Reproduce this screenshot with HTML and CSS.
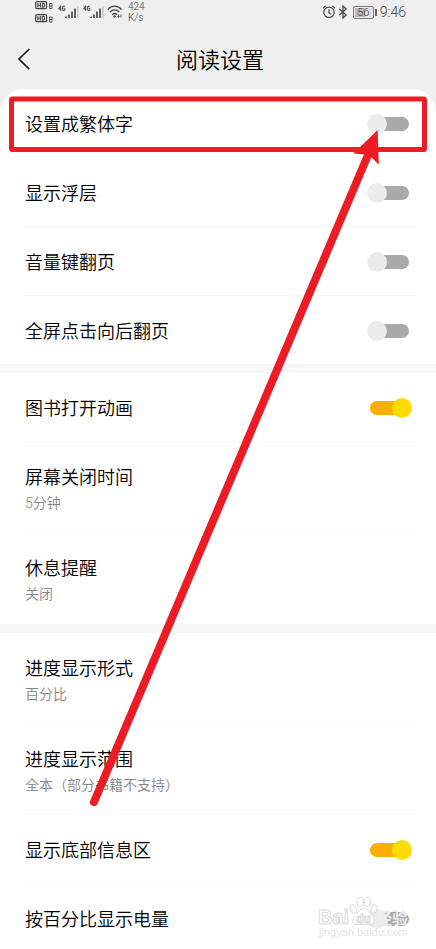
FILE: index.html
```html
<!DOCTYPE html>
<html lang="zh-CN">
<head>
<meta charset="utf-8">
<meta name="viewport" content="width=device-width, initial-scale=1">
<title>阅读设置</title>
<link rel="stylesheet" href="styles.css">
</head>
<body>
<div class="screen">
  <div class="status">
    <div class="status-left">
      <svg class="hd" width="20" height="24" viewBox="0 0 20 24" aria-hidden="true">
        <g id="hdmark">
          <rect x="0.6" y="1.6" width="11" height="7" rx="1.4" fill="none" stroke="#444" stroke-width="1.2"/>
          <path d="M2.8 3v4.4M5.4 3v4.4M2.8 5.2h2.6M7.4 3.3v3.8h1c1.6 0 1.6-3.8 0-3.8z" fill="none" stroke="#444" stroke-width="1.1"/>
        </g>
        <use href="#hdmark" y="13"/>
        <path d="M14.500 3.500h2.500v5h-2.500zM14.500 6h2.500" fill="none" stroke="#555" stroke-width="1"/>
        <path d="M14.500 17h2.500v5h-2.500zM14.500 19.500h2.500" fill="none" stroke="#555" stroke-width="1"/>
      </svg>
      <svg class="signal" width="21" height="14" viewBox="0 0 21 14" aria-hidden="true">
        <g id="bars">
          <path d="M2.500.8L.6 4h2.700M2.600.8v5M6.800 1.300H4.700v4h2.100V3.300H5.800" fill="none" stroke="#444" stroke-width="1"/>
          <path d="M8 11.500v1.500M11 9.500v3.500M14 6.500v6.500M17 3.500v9.500" stroke="#4a4a4a" stroke-width="1.700"/>
          <path d="M19.800 1v12" stroke="#c4c4c4" stroke-width="1.500"/>
        </g>
      </svg>
      <svg class="signal" width="21" height="14" viewBox="0 0 21 14" aria-hidden="true"><use href="#bars"/></svg>
      <svg class="wifi" width="16" height="14" viewBox="0 0 16 14" aria-hidden="true">
        <path d="M.8 4.500C4.800-.1 10.500-.1 14.500 4.500M3 7.100c2.800-3 6.600-3 9.400 0M5.300 9.700c1.500-1.500 3.300-1.500 4.800 0" fill="none" stroke="#444" stroke-width="1.300"/>
        <circle cx="7.500" cy="11.500" r="1.200" fill="#444"/>
        <path d="M11.500 9.500v3M10.500 11.300l1 1.200 1-1.200M14 12.500v-3" fill="none" stroke="#555" stroke-width="1"/>
      </svg>
      <div class="speed"><span>424</span><span>K/s</span></div>
    </div>
    <div class="status-right">
      <svg width="14" height="14" viewBox="0 0 14 14" fill="none" stroke="#444" stroke-width="1.200" aria-hidden="true">
        <circle cx="7" cy="7.300" r="5.200"/><path d="M7 4.300v3.300l2 1.700M1 3.300L3.500 1M13 3.300L10.500 1"/>
      </svg>
      <svg width="10" height="14" viewBox="0 0 10 14" fill="none" stroke="#444" stroke-width="1.200" aria-hidden="true">
        <path d="M1.200 4l7 6L5 13V1l3.200 3-7 6"/>
      </svg>
      <span class="battery"><span class="battery-level">56</span></span>
      <span class="clock">9:46</span>
    </div>
  </div>

  <header class="titlebar">
    <button class="back" type="button" aria-label="返回">
      <svg width="14" height="24" viewBox="0 0 14 24" fill="none" stroke="#111" stroke-width="1.600"><path d="M12.300 2L2 12l10.300 10.300"/></svg>
    </button>
    <h1>阅读设置</h1>
  </header>

  <main class="settings">
    <section class="group">
      <label class="row"><span class="name">设置成繁体字</span><input class="switch" type="checkbox"></label>
      <label class="row"><span class="name">显示浮层</span><input class="switch" type="checkbox"></label>
      <label class="row"><span class="name">音量键翻页</span><input class="switch" type="checkbox"></label>
      <label class="row"><span class="name">全屏点击向后翻页</span><input class="switch" type="checkbox"></label>
    </section>
    <section class="group">
      <label class="row"><span class="name">图书打开动画</span><input class="switch" type="checkbox" checked></label>
      <button class="row choice" type="button"><span class="name">屏幕关闭时间</span><span class="value">5分钟</span></button>
      <button class="row choice" type="button"><span class="name">休息提醒</span><span class="value">关闭</span></button>
    </section>
    <section class="group">
      <button class="row choice" type="button"><span class="name">进度显示形式</span><span class="value">百分比</span></button>
      <button class="row choice" type="button"><span class="name">进度显示范围</span><span class="value">全本（部分书籍不支持）</span></button>
      <label class="row"><span class="name">显示底部信息区</span><input class="switch" type="checkbox" checked></label>
      <label class="row"><span class="name">按百分比显示电量</span><input class="switch" type="checkbox"></label>
    </section>
  </main>

  <svg class="pointer" viewBox="0 0 436 949" aria-hidden="true">
    <rect x="11.500" y="99" width="413" height="50.500" rx="1" fill="none" stroke="#ed1c24" stroke-width="5"/>
    <path d="M94 802L368 155" stroke="#ed1c24" stroke-width="8" stroke-linecap="round"/>
    <path d="M377.700 130L353.300 153.500l10.500.7 7.700 3.300 7.300 7z" fill="#ed1c24"/>
  </svg>

  <svg class="watermark" width="94" height="46" viewBox="0 0 94 46">
    <g class="mark">
      <text class="brand" x="1" y="29">Bai</text>
      <ellipse cx="36.500" cy="14" rx="3" ry="4.200" transform="rotate(-20 36.500 14)"/>
      <ellipse cx="43" cy="7" rx="3.200" ry="4.800"/>
      <ellipse cx="50.500" cy="7" rx="3.200" ry="4.800"/>
      <ellipse cx="57" cy="14" rx="3" ry="4.200" transform="rotate(20 57 14)"/>
      <path d="M46.500 13.500c-4 0-5 4-8 6.500-5 4-2 9.500 2 9.500h12.500c4.500 0 6.500-5.500 2-9.500-3-2.500-4.500-6.500-8.500-6.500z"/>
      <text class="du" x="39" y="28">du</text>
      <text class="cn" x="59" y="29">经验</text>
    </g>
    <text class="url" x="2" y="41">jingyan.baidu.com</text>
  </svg>
</div>
</body>
</html>
```
FILE: styles.css
```css
* {
  box-sizing: border-box;
}

body {
  margin: 0;
  background: #efefef;
  color: #000;
  font-family: Roboto, "Noto Sans CJK SC", sans-serif;
  font-weight: 350;
}

.screen {
  position: relative;
  overflow: hidden;
}

/* Status bar */

.status {
  display: flex;
  justify-content: space-between;
  height: 28px;
  padding: 0 30px 0 35px;
  color: #404040;
}

.status-left,
.status-right {
  display: flex;
  align-items: flex-start;
}

.signal {
  margin: 5px 0 0 3px;
}

.signal + .signal {
  margin-left: 4px;
}

.wifi {
  margin: 5px 0 0 3px;
}

.speed {
  display: flex;
  flex-direction: column;
  margin: 1px 0 0 5px;
  font-size: 10px;
  line-height: 11px;
}

.status-right {
  gap: 2px;
  height: 24px;
  align-items: center;
}

.battery {
  position: relative;
  margin: 0 4px 0 3px;
  padding: 1px;
  border: 1px solid #777;
  border-radius: 2px;
}

.battery::after {
  content: "";
  position: absolute;
  top: 2px;
  right: -4px;
  width: 2px;
  height: 7px;
  background: #666;
}

.battery-level {
  display: block;
  width: 17px;
  background: linear-gradient(90deg, #b9b9b9 56%, #e2e2e2 56%);
  font-size: 11px;
  line-height: 9px;
  text-align: center;
  color: #333;
}

.clock {
  font-size: 14px;
  line-height: 24px;
}

/* Title bar */

.titlebar {
  display: grid;
  grid-template-columns: 48px 1fr 44px;
  align-items: center;
  height: 61px;
}

.back {
  display: flex;
  justify-content: center;
  padding: 0;
  border: 0;
  background: none;
}

h1 {
  margin: 0;
  padding-top: 4px;
  font-size: 22px;
  line-height: 32px;
  font-weight: inherit;
  text-align: center;
}

/* Settings list */

.settings {
  display: flex;
  flex-direction: column;
  gap: 9px;
  overflow: hidden;
  border-radius: 24px 24px 0 0;
  background: #f7f7f7;
}

.group {
  padding: 0 20px 0 25px;
  background: #fff;
}

.row {
  display: flex;
  align-items: center;
  justify-content: space-between;
  width: 100%;
  padding: 21px 0 19px;
  border: 0;
  border-bottom: 1px solid #f6f6f6;
  background: none;
  color: inherit;
  font-family: inherit;
  font-weight: inherit;
  text-align: left;
}

.row:last-child {
  border-bottom: 0;
}

.group:last-child .row:last-child {
  padding-bottom: 16px;
}

.choice {
  flex-direction: column;
  align-items: flex-start;
  gap: 2px;
}

.group:nth-child(2) .choice:last-child {
  padding-bottom: 20px;
}

.name {
  padding-top: 2px;
  font-size: 18px;
  line-height: 26px;
}

.value {
  font-size: 14px;
  line-height: 20px;
  color: #868686;
}

.switch {
  appearance: none;
  position: relative;
  width: 45px;
  height: 20px;
  margin: 0 4px 0 0;
}

.switch::before {
  content: "";
  position: absolute;
  inset: 3px;
  border-radius: 7px;
  background: #a9a9a9;
}

.switch::after {
  content: "";
  position: absolute;
  top: 0;
  left: 0;
  width: 20px;
  height: 20px;
  border-radius: 50%;
  background: #ececec;
}

.switch:checked::before {
  background: #ffae00;
}

.switch:checked::after {
  left: auto;
  right: 0;
  background: #ffdc00;
}

/* Overlays */

.pointer {
  position: absolute;
  top: 0;
  left: 0;
  width: 100%;
  pointer-events: none;
}

.watermark {
  position: absolute;
  right: 25px;
  bottom: 8px;
  pointer-events: none;
  font-family: "Liberation Sans", "Noto Sans CJK SC", sans-serif;
}

.mark {
  fill: #fff;
  fill-opacity: 0.7;
  stroke: #dcdcdc;
  stroke-width: 1;
  font-weight: 700;
}

.brand {
  font-size: 20px;
}

.du {
  font-size: 12px;
}

.cn {
  font-size: 16px;
  fill: #eee;
  fill-opacity: 1;
  stroke: none;
}

.url {
  font-size: 11px;
  fill: #e4e4e4;
}
```
